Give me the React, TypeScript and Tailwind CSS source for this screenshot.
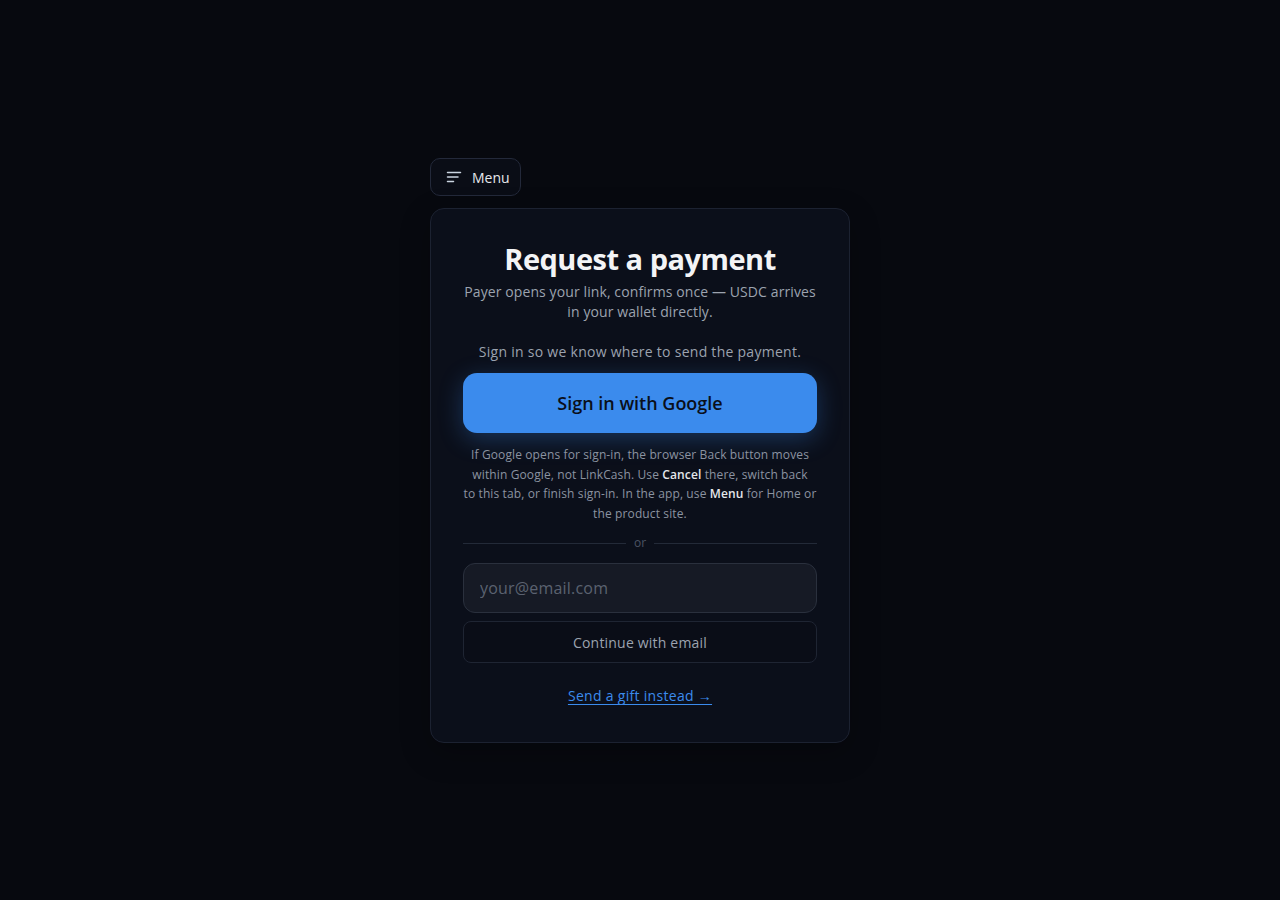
import React from "react";

export default function App() {
  const font = { fontFamily: '"Open Sans", "Liberation Sans", sans-serif' };
  return (
    <div
      className="min-h-[900px] w-full bg-[#07090f] flex justify-center pt-[158px]"
      style={font}
    >
      <div className="w-[420px] flex flex-col gap-3">
        <div>
          <button className="h-[38px] pl-[15px] pr-[10px] inline-flex items-center gap-[10px] rounded-[10px] border border-[#23293a] bg-[#0a0d16] text-[#e5e7eb] text-[14px]">
            <svg width="16" height="16" viewBox="0 0 16 16" fill="none" stroke="#cbd5e1" strokeWidth="1.5" strokeLinecap="round">
              <line x1="1.5" y1="3.5" x2="14.5" y2="3.5" />
              <line x1="1.5" y1="8" x2="12" y2="8" />
              <line x1="1.5" y1="12.5" x2="7.5" y2="12.5" />
            </svg>
            <span>Menu</span>
          </button>
        </div>
        <div className="rounded-[14px] border border-[#1c2231] bg-[#0b0f1a] px-8 pt-[31px] pb-[36px] flex flex-col items-center text-center shadow-[0_10px_30px_rgba(0,0,0,0.25)]">
          <h1 className="text-[29px] leading-[38px] font-bold text-[#f3f4f6] tracking-[-0.5px]">Request a payment</h1>
          <p className="mt-[4px] text-[14px] leading-[20px] text-[#9ca3af] tracking-[0.1px]">
            Payer opens your link, confirms once — USDC arrives in your wallet directly.
          </p>
          <p className="mt-5 text-[14px] leading-[20px] text-[#9ca3af] tracking-[0.27px]">
            Sign in so we know where to send the payment.
          </p>
          <button className="mt-[11px] w-full h-[60px] rounded-[14px] bg-[#3b8bed] text-[#0a0f1a] text-[18px] font-semibold shadow-[0_6px_24px_rgba(59,139,237,0.3)]">
            Sign in with Google
          </button>
          <p className="mt-[12px] w-full text-[12px] leading-[19.5px] text-[#8b93a1] tracking-[0.12px] whitespace-nowrap">
            If Google opens for sign-in, the browser Back button moves
            <br />
            within Google, not LinkCash. Use <b className="font-semibold text-[#e5e7eb]">Cancel</b> there, switch back
            <br />
            to this tab, or finish sign-in. In the app, use <b className="font-semibold text-[#e5e7eb]">Menu</b> for Home or
            <br />
            the product site.
          </p>
          <div className="mt-[12px] w-full flex items-center gap-[8px]">
            <div className="flex-1 h-px bg-[#232a38]" />
            <span className="text-[12px] leading-[16px] text-[#4b5363]">or</span>
            <div className="flex-1 h-px bg-[#232a38]" />
          </div>
          <input
            className="mt-[12px] w-full h-[50px] rounded-[12px] border border-[#2a303d] bg-[#161a25] px-4 text-[16px] text-[#e5e7eb] placeholder-[#5b6270] outline-none tracking-[0.2px]"
            placeholder="your@email.com"
          />
          <button className="mt-[8px] w-full h-[42px] rounded-[8px] border border-[#1f2533] bg-[#0a0d17] text-[14px] text-[#9ca3af] tracking-[0.2px]">
            Continue with email
          </button>
          <a className="mt-[23px] text-[14px] leading-[20px] text-[#3b8bed] underline underline-offset-[3px] tracking-[0.3px]" href="#">
            Send a gift instead →
          </a>
        </div>
      </div>
    </div>
  );
}
